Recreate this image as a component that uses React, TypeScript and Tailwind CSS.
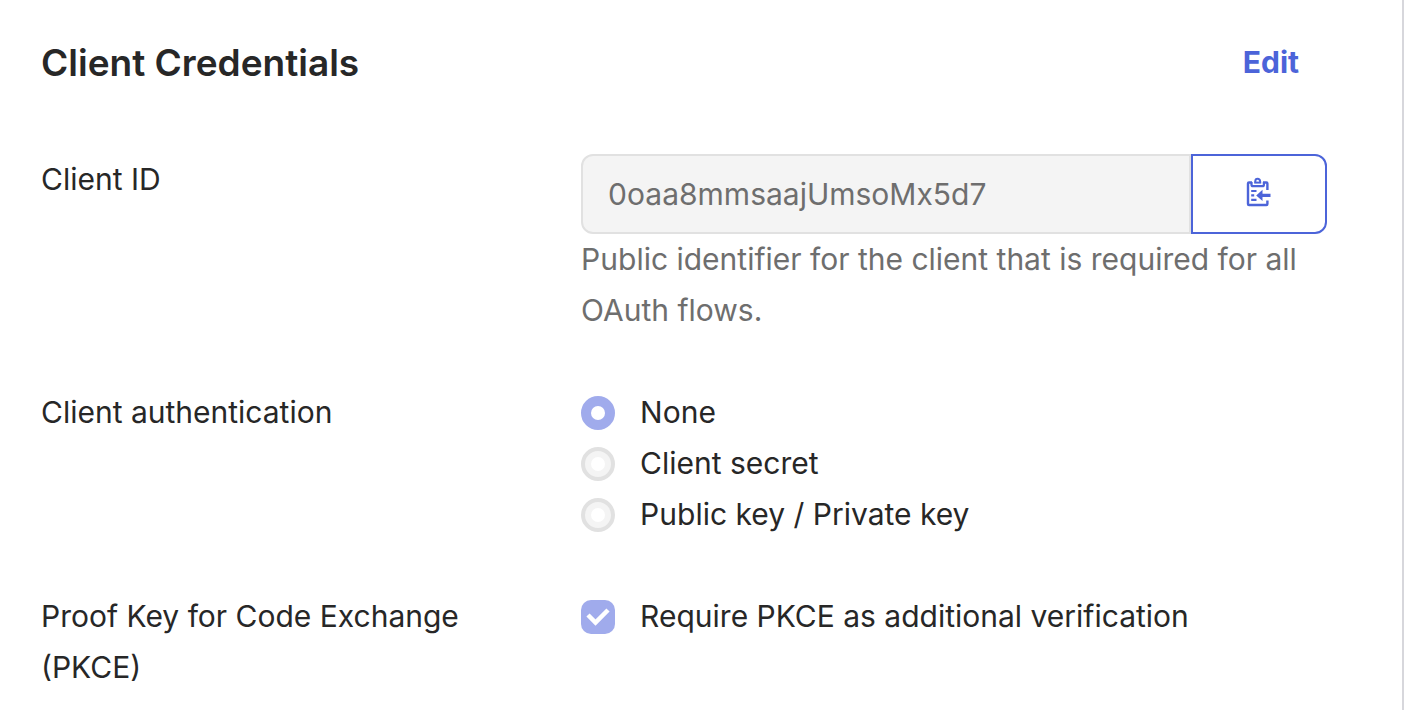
import type { ReactNode } from 'react';

const authMethods = [
  { value: 'none', label: 'None' },
  { value: 'client_secret', label: 'Client secret' },
  { value: 'private_key', label: 'Public key / Private key' },
];

function PasteIcon() {
  return (
    <svg viewBox="0 1 24 30" className="h-[30px] w-6 overflow-visible" fill="none" aria-hidden="true">
      <path d="M5 4.500H2Q1 4.500 1 5.500V26Q1 27 2 27h17.400Q20.400 27 20.400 26v-3.500" stroke="currentColor" strokeWidth="2.4" />
      <path d="M16 4.500h3.400Q20.400 4.500 20.400 5.500V12" stroke="currentColor" strokeWidth="2.4" />
      <path d="M4.500 4v2.500Q4.500 8.200 6 8.200h9.400Q16.900 8.200 16.900 6.500V4" stroke="currentColor" strokeWidth="2.3" />
      <path d="M7.200 4.600h7" stroke="currentColor" strokeWidth="2" />
      <path d="M8.300 4.500V3.200a2.400 2.400 0 0 1 4.800 0v1.300" stroke="currentColor" strokeWidth="2" />
      <path d="M4.200 13h5.300M4.200 17.400h3M4.200 21.900h5.300" stroke="currentColor" strokeWidth="2.2" />
      <path d="M9.200 17.400l6.300-5.600v3.900H23.500v3.400h-8v3.900z" fill="currentColor" />
    </svg>
  );
}

function Row({ children }: { children: ReactNode }) {
  return <div className="grid grid-cols-[42%_1fr]">{children}</div>;
}

export default function App() {
  return (
    <main className="min-h-screen bg-white pr-6 font-[Inter,sans-serif] text-[30px] leading-[51px] text-[#272727]">
      <section className="min-h-screen border-r-2 border-[#d7d7dc] pt-[37px] pr-[75px] pb-4 pl-[41px]">
        <header className="mb-[66px] flex items-center justify-between pr-7">
          <h2 className="text-[37px] font-semibold">Client Credentials</h2>
          <button type="button" className="font-bold text-[#4c64d9]">
            Edit
          </button>
        </header>

        <div className="flex flex-col gap-[51px]">
          <Row>
            <label htmlFor="client-id">Client ID</label>
            <div>
              <div className="flex h-20">
                <input
                  id="client-id"
                  type="text"
                  readOnly
                  defaultValue="0oaa8mmsaajUmsoMx5d7"
                  className="min-w-0 flex-1 rounded-l-xl border-2 border-[#e1e1e1] bg-[#f4f4f4] px-[25px] text-[#6e6e6e] outline-none"
                />
                <button
                  type="button"
                  aria-label="Copy to clipboard"
                  className="flex w-[136px] items-center justify-center rounded-r-xl border-2 border-[#4c64d9] text-[#4c64d9]"
                >
                  <PasteIcon />
                </button>
              </div>
              <p className="text-[#6e6e6e]">
                Public identifier for the client that is required for all OAuth flows.
              </p>
            </div>
          </Row>

          <Row>
            <span id="auth-label">Client authentication</span>
            <div role="radiogroup" aria-labelledby="auth-label">
              {authMethods.map((m) => (
                <label key={m.value} className="flex items-start gap-[25px]">
                  <input
                    type="radio"
                    name="client-auth"
                    value={m.value}
                    disabled
                    defaultChecked={m.value === 'none'}
                    className="mt-[9px] grid size-[34px] shrink-0 appearance-none place-content-center rounded-full border-4 border-[#e1e1e1] bg-[#f4f4f4] before:size-[14px] before:rounded-full before:bg-white checked:border-[#a0abec] checked:bg-[#a0abec]"
                  />
                  {m.label}
                </label>
              ))}
            </div>
          </Row>

          <Row>
            <span className="pr-12">Proof Key for Code Exchange (PKCE)</span>
            <label className="flex items-start gap-[25px]">
              <span className="relative mt-[9px] size-[34px] shrink-0">
                <input
                  type="checkbox"
                  disabled
                  defaultChecked
                  className="block size-full appearance-none rounded-[10px] bg-[#a0abec]"
                />
                <svg viewBox="0 0 34 34" className="pointer-events-none absolute inset-0" fill="none" aria-hidden="true">
                  <path d="M7 15l7.500 7.500L27 10" stroke="white" strokeWidth="4.500" />
                </svg>
              </span>
              Require PKCE as additional verification
            </label>
          </Row>
        </div>
      </section>
    </main>
  );
}
